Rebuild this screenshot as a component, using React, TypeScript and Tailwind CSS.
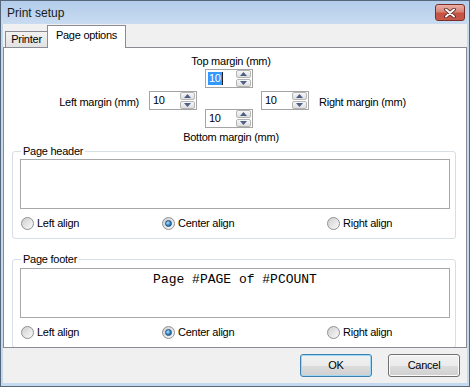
import React from 'react';

function SpinButtons() {
  return (
    <div className="flex flex-col gap-[1px] mr-[1px]">
      <div className="w-[15px] h-[8px] rounded-[2px] border border-[#b5b5b5] bg-gradient-to-b from-[#f7f7f7] to-[#dedede] flex items-center justify-center">
        <svg width="7" height="4" viewBox="0 0 7 4">
          <polygon points="3.5,0 7,4 0,4" fill="#4c5f86" />
        </svg>
      </div>
      <div className="w-[15px] h-[8px] rounded-[2px] border border-[#b5b5b5] bg-gradient-to-b from-[#f7f7f7] to-[#dedede] flex items-center justify-center">
        <svg width="7" height="4" viewBox="0 0 7 4">
          <polygon points="0,0 7,0 3.5,4" fill="#4c5f86" />
        </svg>
      </div>
    </div>
  );
}

function SpinBox({ value, selected }: { value: string; selected?: boolean }) {
  return (
    <div className="w-[48px] h-[19px] border border-[#a4a4a4] bg-white flex items-center justify-between">
      {selected ? (
        <div className="flex items-center pl-[2px]">
          <span className="bg-[#3399ff] text-white leading-[13px] px-[1px]">{value}</span>
          <span className="w-[1px] h-[13px] bg-[#222]" />
        </div>
      ) : (
        <span className="pl-[3px] leading-[13px]">{value}</span>
      )}
      <SpinButtons />
    </div>
  );
}

function Radio({ label, checked }: { label: string; checked?: boolean }) {
  return (
    <div className="flex items-center gap-[3px]">
      <span className="w-[13px] h-[13px] rounded-full border border-[#8f9091] bg-gradient-to-br from-[#cfcfcf] to-[#fbfbfb] flex items-center justify-center">
        {checked && (
          <span className="w-[7px] h-[7px] rounded-full border border-[#1b4f80] bg-[radial-gradient(circle_at_35%_35%,#b4e3ff,#2a7fc4_60%,#0f4e85)]" />
        )}
      </span>
      <span className="leading-[13px]">{label}</span>
    </div>
  );
}

function AlignRow() {
  return (
    <div className="flex items-center h-[13px] mt-[8px] pl-[1px]">
      <div className="w-[141px]">
        <Radio label="Left align" />
      </div>
      <div className="w-[165px]">
        <Radio label="Center align" checked />
      </div>
      <Radio label="Right align" />
    </div>
  );
}

function WinButton({ label, isDefault }: { label: string; isDefault?: boolean }) {
  return (
    <button
      className={
        isDefault
          ? 'w-[72px] h-[23px] rounded-[3px] border border-[#3c7fb1] shadow-[inset_0_0_0_1px_#9fd9f5] bg-[linear-gradient(#f2f2f2,#ebebeb_50%,#dddddd_50%,#cfcfcf)] text-black'
          : 'w-[72px] h-[23px] rounded-[3px] border border-[#707070] shadow-[inset_0_0_0_1px_#fbfbfb] bg-[linear-gradient(#f2f2f2,#ebebeb_50%,#dddddd_50%,#cfcfcf)] text-black'
      }
    >
      {label}
    </button>
  );
}

export default function App() {
  return (
    <div className="w-[470px] h-[387px] border border-[#56677a] bg-[#c4d8ee] flex flex-col font-['Liberation_Sans',Arial,sans-serif] text-[11px] tracking-[-0.25px] text-black overflow-hidden">
      {/* Title bar */}
      <div className="h-[23px] flex items-center justify-between pl-[6px] pr-[4px] bg-gradient-to-b from-[#b3cdeb] to-[#c8dbf1]">
        <span className="text-[12px] tracking-normal text-[#1a1a1a]">Print setup</span>
        <div className="w-[30px] h-[17px] rounded-[3px] border border-[#7b3027] bg-[linear-gradient(#eab0a6,#d98577_45%,#c65243_55%,#c7584a)] flex items-center justify-center">
          <svg width="12" height="10" viewBox="0 0 12 10">
            <path d="M2 1.5 L10 8.5 M10 1.5 L2 8.5" stroke="#4a1d18" strokeWidth="3.6" strokeLinecap="round" />
            <path d="M2 1.5 L10 8.5 M10 1.5 L2 8.5" stroke="#ffffff" strokeWidth="2" strokeLinecap="round" />
          </svg>
        </div>
      </div>

      {/* Client area */}
      <div className="flex-1 mx-[2px] mb-[3px] bg-[#f0f0f0] flex flex-col">
        {/* Tabs */}
        <div className="h-[23px] flex items-end pl-[2px]">
          <div className="w-[43px] h-[16px] border border-b-0 border-[#898c95] bg-gradient-to-b from-[#f2f2f2] to-[#e2e2e2] flex items-center justify-center leading-[13px]">
            Printer
          </div>
          <div className="relative z-10 -ml-px -mb-px w-[79px] h-[23px] border border-b-0 border-[#898c95] bg-white flex justify-center pt-[3px] leading-[13px]">
            Page options
          </div>
        </div>

        {/* Panel */}
        <div className="h-[301px] border border-[#898c95] bg-white overflow-hidden flex flex-col">
          {/* Margins */}
          <div className="pt-[7px] w-[454px] text-center leading-[13px]">Top margin (mm)</div>
          <div className="mt-[1px] ml-[201px]">
            <SpinBox value="10" selected />
          </div>
          <div className="mt-[3px] flex items-center h-[19px]">
            <div className="w-[135px] text-right leading-[13px] pt-[4px]">Left margin (mm)</div>
            <div className="ml-[10px]">
              <SpinBox value="10" />
            </div>
            <div className="ml-[64px]">
              <SpinBox value="10" />
            </div>
            <div className="ml-[10px] leading-[13px] pt-[4px]">Right margin (mm)</div>
          </div>
          <div className="-mt-px ml-[201px]">
            <SpinBox value="10" />
          </div>
          <div className="mt-[3px] w-[454px] text-center leading-[13px]">Bottom margin (mm)</div>

          {/* Page header */}
          <fieldset className="mt-[1px] ml-[8px] w-[444px] border border-[#d5dfe5] rounded-[3px] pl-[7px] pr-[5px] pb-[8px]">
            <legend className="ml-[1px] px-[2px] leading-[13px]">Page header</legend>
            <div className="mt-[1px] h-[50px] border border-[#a8a8a8] bg-white" />
            <AlignRow />
          </fieldset>

          {/* Page footer */}
          <fieldset className="mt-[14px] ml-[8px] w-[444px] border border-[#d5dfe5] rounded-[3px] pl-[7px] pr-[5px] pb-[8px] shrink-0">
            <legend className="ml-[1px] px-[2px] leading-[13px]">Page footer</legend>
            <div className="mt-[2px] h-[50px] border border-[#a8a8a8] bg-white pt-[3px] text-center font-['Liberation_Mono','Courier_New',monospace] text-[13px] tracking-normal leading-[15px]">
              Page #PAGE of #PCOUNT
            </div>
            <AlignRow />
          </fieldset>
        </div>

        {/* Buttons */}
        <div className="flex justify-end gap-[16px] pt-[6px] pr-[7px]">
          <WinButton label="OK" isDefault />
          <WinButton label="Cancel" />
        </div>
      </div>
    </div>
  );
}
